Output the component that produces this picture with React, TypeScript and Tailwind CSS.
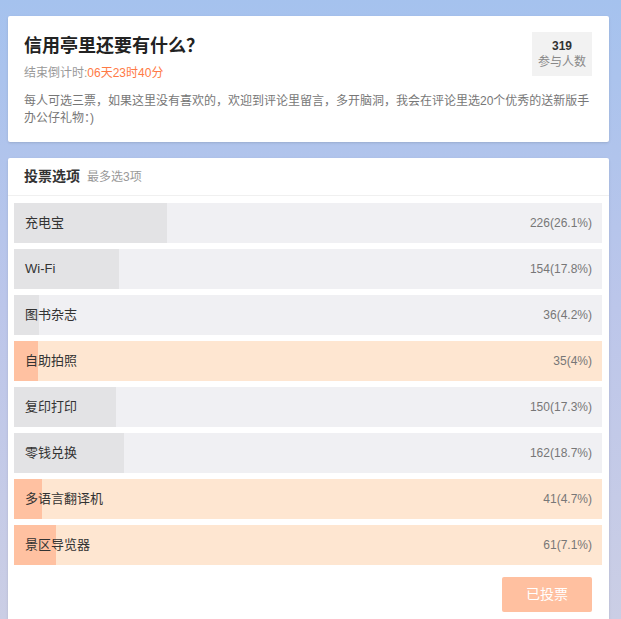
import React from 'react'

type Option = { label: string; count: number; pct: string; width: number; mine?: boolean }

const options: Option[] = [
  { label: '充电宝', count: 226, pct: '26.1%', width: 26.1 },
  { label: 'Wi-Fi', count: 154, pct: '17.8%', width: 17.8 },
  { label: '图书杂志', count: 36, pct: '4.2%', width: 4.2 },
  { label: '自助拍照', count: 35, pct: '4%', width: 4, mine: true },
  { label: '复印打印', count: 150, pct: '17.3%', width: 17.3 },
  { label: '零钱兑换', count: 162, pct: '18.7%', width: 18.7 },
  { label: '多语言翻译机', count: 41, pct: '4.7%', width: 4.7, mine: true },
  { label: '景区导览器', count: 61, pct: '7.1%', width: 7.1, mine: true },
]

function OptionRow({ opt }: { opt: Option }) {
  return (
    <div
      className={`relative h-10 flex items-center justify-between pl-[11px] pr-[10px] ${
        opt.mine ? 'bg-[#fee6d1]' : 'bg-[#f0f0f3]'
      }`}
    >
      <div
        className={`absolute left-0 top-0 bottom-0 ${opt.mine ? 'bg-[#ffc1a1]' : 'bg-[#e3e3e5]'}`}
        style={{ width: `${opt.width}%` }}
      />
      <span className="relative text-[13px] text-[#333]">{opt.label}</span>
      <span className="relative text-[12px] text-[#777]">
        {opt.count}({opt.pct})
      </span>
    </div>
  )
}

export default function App() {
  return (
    <div
      className="min-h-[619px] w-full bg-gradient-to-b from-[#a5c2ee] via-[#bcc6ea] to-[#cbcee5] pt-4 px-2"
      style={{ fontFamily: '"Liberation Sans", "Noto Sans CJK SC", sans-serif' }}
    >
      <div className="bg-white w-[601px] rounded-[2px] shadow-sm pl-4 pr-[17px] pt-4 pb-[15px]">
        <div className="flex justify-between items-start">
          <div>
            <h1
              className="text-[18px] font-bold text-[#222] leading-[24px]"
              style={{ fontFamily: '"Noto Sans CJK SC", sans-serif' }}
            >
              信用亭里还要有什么？
            </h1>
            <div className="mt-2 text-[12px] text-[#999] leading-[18px]">
              结束倒计时:<span className="text-[#ff7a45]">06天23时40分</span>
            </div>
          </div>
          <div className="h-[44px] w-[60px] bg-[#f2f2f2] flex flex-col items-center justify-center">
            <div className="text-[12px] font-bold text-[#333] leading-[16px]">319</div>
            <div className="text-[12px] text-[#888] leading-[16px]">参与人数</div>
          </div>
        </div>
        <p className="mt-[11px] text-[12px] text-[#777] leading-[17px]">
          每人可选三票，如果这里没有喜欢的，欢迎到评论里留言，多开脑洞，我会在评论里选20个优秀的送新版手办公仔礼物：)
        </p>
      </div>

      <div className="mt-4 bg-white w-[601px] rounded-t-[2px] shadow-sm pb-2">
        <div className="h-[38px] flex items-center gap-[7px] px-4 border-b border-[#f0f0f0]">
          <span className="text-[14px] font-bold text-[#333]">投票选项</span>
          <span className="text-[12px] text-[#999]">最多选3项</span>
        </div>
        <div className="px-[6px] pt-[7px] flex flex-col gap-[6px] w-[600px]">
          {options.map((opt) => (
            <OptionRow key={opt.label} opt={opt} />
          ))}
        </div>
        <div className="flex justify-end pr-[17px] mt-3">
          <button className="w-[90px] h-[35px] bg-[#ffc0a0] text-white text-[14px] rounded-[2px]">已投票</button>
        </div>
      </div>
    </div>
  )
}
